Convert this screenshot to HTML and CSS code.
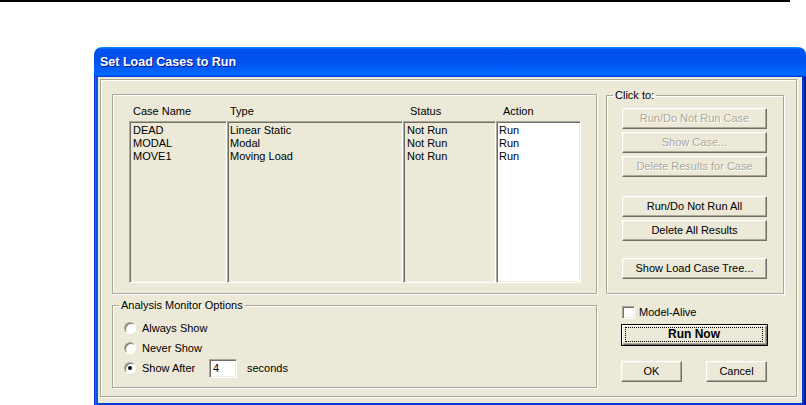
FILE: index.html
```html
<!DOCTYPE html>
<html>
<head>
<meta charset="utf-8">
<title>Set Load Cases to Run</title>
<link rel="stylesheet" href="styles.css">
</head>
<body>
<div class="rule"></div>
<div class="window">
  <div class="titlebar"><span class="title">Set Load Cases to Run</span></div>
  <div class="client">
    <div class="frame">
      <div class="col-left">
        <div class="cases">
          <div class="table">
            <div class="head h1">Case Name</div>
            <div class="head h2">Type</div>
            <div class="head h3">Status</div>
            <div class="head h4">Action</div>
            <div class="list l1"><div>DEAD</div><div>MODAL</div><div>MOVE1</div></div>
            <div class="list l2"><div>Linear Static</div><div>Modal</div><div>Moving Load</div></div>
            <div class="list l3"><div>Not Run</div><div>Not Run</div><div>Not Run</div></div>
            <div class="list l4 white"><div>Run</div><div>Run</div><div>Run</div></div>
          </div>
        </div>
        <fieldset class="group monitor">
          <legend>Analysis Monitor Options</legend>
          <div class="opts">
            <div class="opt"><span class="radio"></span><span class="lbl">Always Show</span></div>
            <div class="opt"><span class="radio"></span><span class="lbl">Never Show</span></div>
            <div class="opt"><span class="radio on"><span class="dot"></span></span><span class="lbl">Show After</span><span class="edit">4</span><span class="secs">seconds</span></div>
          </div>
        </fieldset>
      </div>
      <div class="col-right">
        <fieldset class="group clickto">
          <legend>Click to:</legend>
          <div class="btncol">
            <div class="btn dis">Run/Do Not Run Case</div>
            <div class="btn dis">Show Case...</div>
            <div class="btn dis">Delete Results for Case</div>
            <div class="btn sep1">Run/Do Not Run All</div>
            <div class="btn">Delete All Results</div>
            <div class="btn sep2">Show Load Case Tree...</div>
          </div>
        </fieldset>
        <div class="check-row"><span class="check"></span><span>Model-Alive</span></div>
        <div class="btn default"><span class="focus">Run Now</span></div>
        <div class="okrow">
          <div class="btn small">OK</div>
          <div class="btn small">Cancel</div>
        </div>
      </div>
    </div>
  </div>
</div>
</body>
</html>
```

FILE: styles.css
```css
* { box-sizing: border-box; }
html, body { margin: 0; padding: 0; background: #fff; }
body {
  font-family: "Liberation Sans", Arial, sans-serif;
  font-size: 11px;
  line-height: 13px;
  color: #000;
  width: 806px;
  height: 405px;
  overflow: hidden;
}
.rule { width: 790px; height: 2px; background: #000; }

.window {
  margin: 45px 0 0 94px;
  width: 712px;
  height: 360px;
  display: flex;
  flex-direction: column;
}
.titlebar {
  height: 30px;
  flex: none;
  border-radius: 8px 8px 0 0;
  background: linear-gradient(180deg, #0997ff, #0053ee 8%, #0050ee 40%, #0066ff 88%, #0066ff 93%, #005bff 95%, #003dd7 96%, #003dd7);
  display: flex;
  align-items: center;
  padding-left: 6px;
}
.title {
  color: #fff;
  font-weight: bold;
  font-size: 12.5px;
  text-shadow: 1px 1px #0f1089;
}
.client {
  flex: 1;
  background: #ece9d8;
  padding: 2px 8px 8px 6px;
  box-shadow:
    inset 1px 0 #0831d9, inset 2px 0 #166aee, inset 3px 0 #0855dd, inset 4px 0 #0855dd,
    inset -1px 0 #00138c, inset -2px 0 #001ea0, inset -3px 0 #003bda, inset -4px 0 #003bda,
    inset 0 -1px #00138c, inset 0 -2px #001ea0, inset 0 -3px #003bda, inset 0 -4px #003bda;
}

.frame {
  width: 697px;
  height: 318px;
  border: 1px solid #aca899;
  box-shadow: inset 1px 1px #fff, 1px 1px #fff;
  display: grid;
  grid-template-columns: 485px 178px;
  column-gap: 9px;
  align-items: start;
  padding: 9px 0 0 11px;
}

/* etched group boxes */
.cases, .group {
  border: 1px solid #aca899;
  box-shadow: inset 1px 1px #fff, 1px 1px #fff;
}
.group {
  margin: 0;
  padding: 0;
  min-width: 0;
}
.group legend {
  margin-left: 6px;
  padding: 0 2px;
  line-height: 13px;
}

.cases {
  margin-top: 5px;
  height: 200px;
  padding: 10px 0 0 16px;
}
.table {
  display: grid;
  grid-template-columns: 98px 176px 93px 85px;
  grid-template-rows: 13px 162px;
  row-gap: 3px;
}
.head { white-space: nowrap; }
.h1 { padding-left: 4px; }
.h2 { padding-left: 3px; }
.h3 { padding-left: 7px; }
.h4 { padding-left: 7px; }
.list {
  border: 1px solid;
  border-color: #aca899 #fff #fff #aca899;
  box-shadow: inset 1px 1px #716f64, inset -1px -1px #f1efe2;
  padding: 2px 0 0 3px;
  background: #ece9d8;
  white-space: nowrap;
}
.l2 { padding-left: 2px; }
.l4 { padding-left: 2px; }
.list.white { background: #fff; }

.monitor { margin-top: 5px; }
.opts { padding: 6px 0 9px 11px; }
.opt {
  height: 20px;
  display: flex;
  align-items: center;
}
.radio {
  width: 12px;
  height: 12px;
  border-radius: 50%;
  border: 1px solid;
  border-color: #aca899 #fff #fff #aca899;
  box-shadow: inset 1px 1px #716f64;
  background: #fff;
  display: flex;
  align-items: center;
  justify-content: center;
  margin-right: 6px;
  flex: none;
}
.dot { width: 4px; height: 4px; border-radius: 50%; background: #000; }
.opt .lbl { width: 67px; }
.edit {
  width: 28px;
  height: 19px;
  background: #fff;
  border: 1px solid;
  border-color: #aca899 #fff #fff #aca899;
  box-shadow: inset 1px 1px #716f64, inset -1px -1px #f1efe2;
  padding: 2px 0 0 3px;
  line-height: 13px;
}
.secs { margin-left: 10px; }

.clickto legend { margin-left: 6px; }
.btncol {
  padding: 6px 0 14px 15px;
  display: flex;
  flex-direction: column;
  gap: 3px;
}
.btn {
  width: 145px;
  height: 21px;
  background: #ece9d8;
  border: 1px solid;
  border-color: #fff #716f64 #716f64 #fff;
  box-shadow: inset -1px -1px #aca899, inset 1px 1px #f1efe2;
  display: flex;
  align-items: center;
  justify-content: center;
  white-space: nowrap;
}
.btn.dis { color: #aca899; text-shadow: 1px 1px #fff; }
.btncol .sep1 { margin-top: 16px; }
.btncol .sep2 { margin-top: 14px; }

.check-row {
  margin-top: 12px;
  padding-left: 16px;
  height: 13px;
  display: flex;
  align-items: center;
}
.check {
  width: 13px;
  height: 13px;
  background: #fff;
  border: 1px solid;
  border-color: #aca899 #fff #fff #aca899;
  box-shadow: inset 1px 1px #716f64, inset -1px -1px #f1efe2;
  margin-right: 4px;
}
.btn.default {
  margin: 5px 0 0 15px;
  width: 147px;
  height: 22px;
  border: 1px solid #000;
  box-shadow: inset 1px 1px #fff, inset -1px -1px #716f64, inset -2px -2px #aca899;
  padding: 2px 4px 3px 3px;
  align-items: stretch;
}
.focus {
  flex: 1;
  border: 1px dotted #000;
  font-weight: bold;
  font-size: 12px;
  display: flex;
  align-items: center;
  justify-content: center;
}
.okrow {
  margin: 15px 0 0 15px;
  display: flex;
  gap: 24px;
}
.btn.small { width: 61px; }
```
